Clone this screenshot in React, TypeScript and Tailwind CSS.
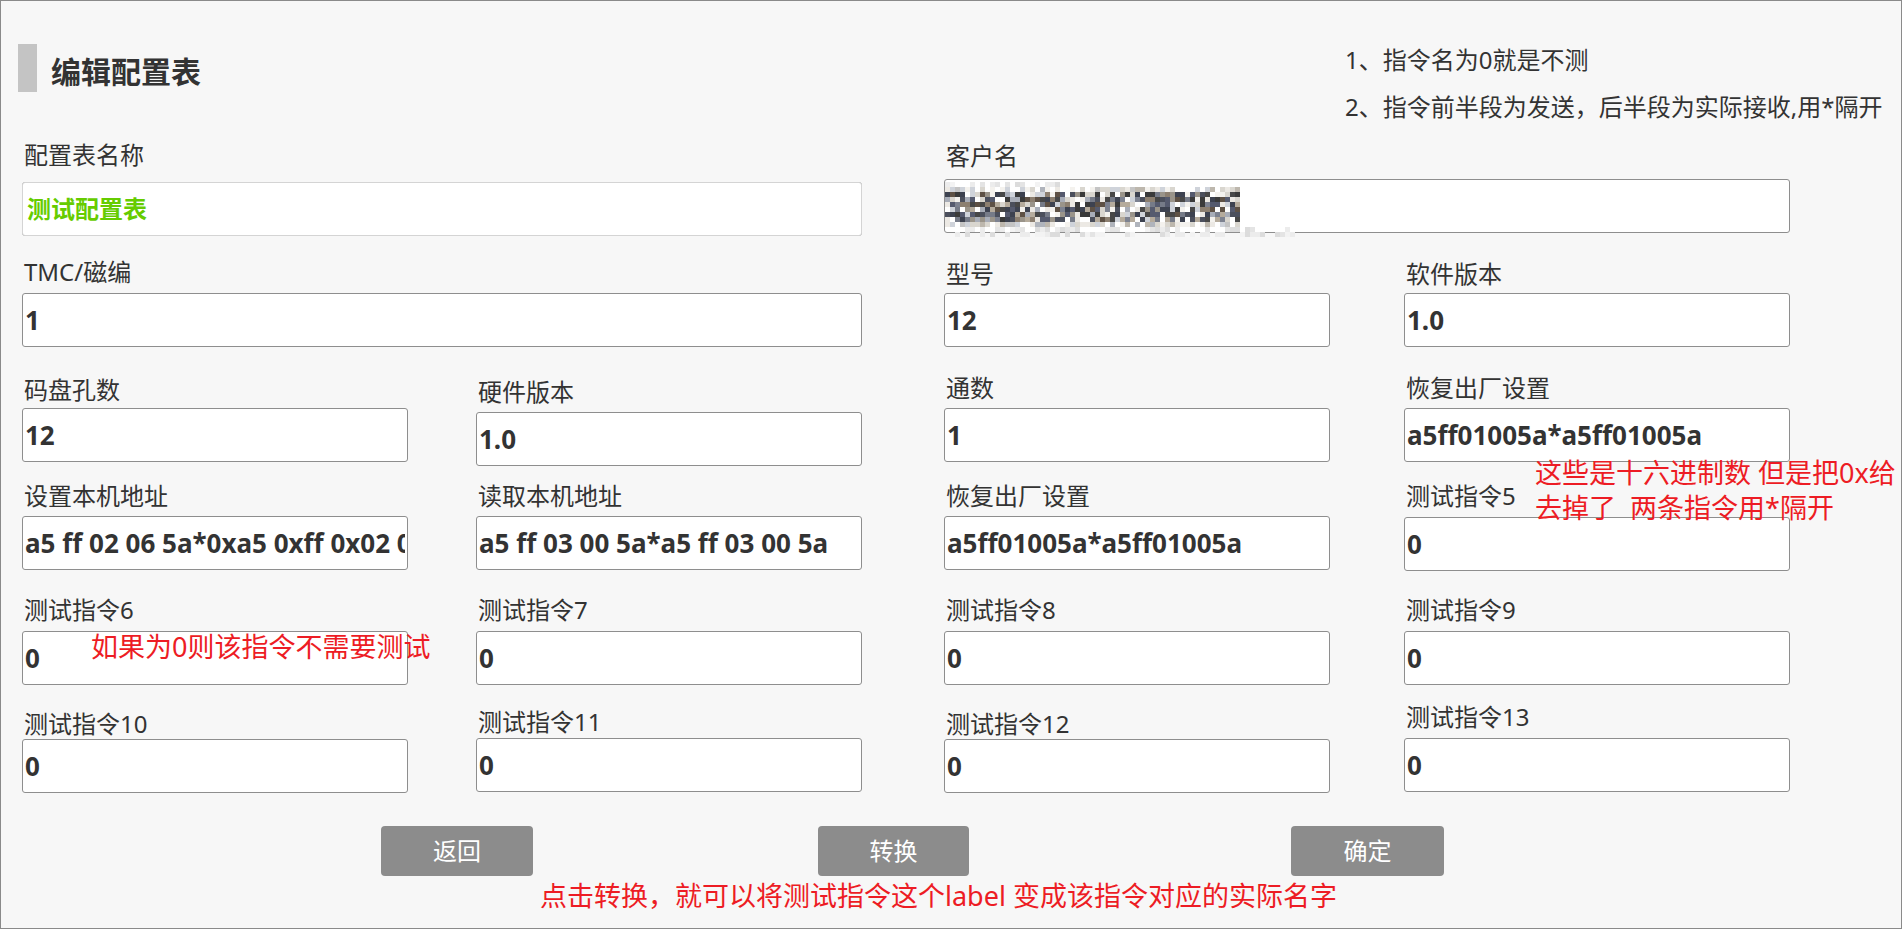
import { ReactNode } from "react";
import { twMerge } from "tailwind-merge";

interface FieldProps {
  label: string;
  value: string;
  labelClass?: string;
  inputClass?: string;
  children?: ReactNode;
}

function Field({ label, value, labelClass, inputClass, children }: FieldProps) {
  return (
    <div className="flex w-full flex-col">
      <span
        className={twMerge(
          "whitespace-nowrap pl-[2px] text-[24px] leading-[30px] text-[#333]",
          labelClass
        )}
      >
        {label}
      </span>
      <div className={twMerge("relative", inputClass)}>
        <input
          readOnly
          defaultValue={value}
          className="block h-[54px] w-full rounded-[3px] border border-[#8e8e8e] bg-white px-[2px] text-[26px] font-bold text-[#333] outline-none"
        />
        {children}
      </div>
    </div>
  );
}

// pixelated customer name, same look as the redacted screenshot
function Mosaic() {
  let s = 20231;
  const rand = () => {
    s = (s * 1664525 + 1013904223) % 4294967296;
    return s / 4294967296;
  };
  const pick = (list: string[]) => list[Math.floor(rand() * list.length)];
  const dark = ["#3a3a3a", "#4b4f5c", "#555a6e", "#5e5145", "#474747", "#3d4250"];
  const mid = ["#7d8290", "#9a948a", "#a8adb8", "#8c7f70", "#767b88", "#b5ab9c"];
  const light = ["#d9d6cf", "#ece9e4", "#ffffff", "#cfd3da", "#f4f2ee", "#ffffff"];
  const faint = ["#e4e4e4", "#ececec", "#f3f3f3", "#dcdcdc"];

  const cells: (string | undefined)[] = [];
  for (let r = 0; r < 11; r++) {
    for (let c = 0; c < 70; c++) {
      let color: string | undefined;
      const x = rand();
      if (r >= 2 && r <= 7 && c <= 58) {
        color = x < 0.38 ? pick(dark) : x < 0.66 ? pick(mid) : pick(light);
      } else if ((r === 1 || r === 8) && c <= 58) {
        color = x < 0.2 ? pick(["#c4c4c4", "#bdb7ad", "#b0b4bc"]) : pick(light);
      } else if (r >= 9 && c <= 69) {
        color = x < 0.55 ? pick(faint) : undefined;
      } else if (r === 0 && c <= 22) {
        color = x < 0.4 ? pick(faint) : undefined;
      }
      cells.push(color);
    }
  }

  return (
    <div className="pointer-events-none absolute left-[1px] top-[3px] grid grid-cols-[repeat(70,5px)] auto-rows-[5px]">
      {cells.map((color, i) => (
        <div key={i} style={color ? { backgroundColor: color } : undefined} />
      ))}
    </div>
  );
}

function Button({ children, className }: { children: ReactNode; className?: string }) {
  return (
    <button
      className={twMerge(
        "h-[50px] w-[152px] rounded-[4px] bg-[#8c8c8c] text-[24px] leading-[50px] text-white",
        className
      )}
    >
      {children}
    </button>
  );
}

export default function App() {
  return (
    <div className="relative box-border h-[929px] w-full overflow-hidden border border-[#8a8a8a] bg-[#f7f7f7] font-['Noto_Sans','Noto_Sans_CJK_SC',sans-serif] text-[#333]">
      {/* header */}
      <div className="flex h-[139px]">
        <div className="flex w-[1344px] items-start pl-[17px] pt-[43px]">
          <div className="h-[48px] w-[19px] bg-[#c4c4c4]" />
          <h1 className="ml-[14px] mt-[4px] text-[30px] font-bold leading-[48px] text-[#333]">
            编辑配置表
          </h1>
        </div>
        <div className="pt-[35px] text-[24px] leading-[47px] whitespace-nowrap">
          <p>1、指令名为0就是不测</p>
          <p>2、指令前半段为发送，后半段为实际接收,用*隔开</p>
        </div>
      </div>

      <div className="pl-[21px]">
        {/* row 1 */}
        <div className="flex h-[117px]">
          <div className="w-[840px]">
            <Field label="配置表名称" value="" inputClass="mt-[12px]">
              <span className="pointer-events-none absolute inset-0 flex items-center rounded-[3px] border border-[#d4d4d4] bg-white pl-[4px] text-[24px] font-bold text-[#66cc00]">
                测试配置表
              </span>
            </Field>
          </div>
          <div className="ml-[82px] w-[846px]">
            <Field label="客户名" value="" labelClass="mt-[1px]" inputClass="mt-[8px]">
              <Mosaic />
            </Field>
          </div>
        </div>

        {/* row 2 */}
        <div className="flex h-[116px]">
          <div className="w-[840px]">
            <Field label="TMC/磁编" value="1" inputClass="mt-[6px]" />
          </div>
          <div className="ml-[82px] flex w-[846px] gap-[74px]">
            <Field label="型号" value="12" labelClass="mt-[2px]" inputClass="mt-[4px]" />
            <Field label="软件版本" value="1.0" labelClass="mt-[2px]" inputClass="mt-[4px]" />
          </div>
        </div>

        {/* row 3 */}
        <div className="flex h-[108px]">
          <div className="flex w-[840px] gap-[68px]">
            <Field label="码盘孔数" value="12" labelClass="mt-[2px]" inputClass="mt-[3px]" />
            <Field label="硬件版本" value="1.0" labelClass="mt-[4px]" inputClass="mt-[5px]" />
          </div>
          <div className="ml-[82px] flex w-[846px] gap-[74px]">
            <Field label="通数" value="1" inputClass="mt-[5px]" />
            <Field label="恢复出厂设置" value="a5ff01005a*a5ff01005a" inputClass="mt-[5px]" />
          </div>
        </div>

        {/* row 4 */}
        <div className="flex h-[114px]">
          <div className="flex w-[840px] gap-[68px]">
            <Field
              label="设置本机地址"
              value="a5 ff 02 06 5a*0xa5 0xff 0x02 0x06 0x5a"
              inputClass="mt-[5px]"
            />
            <Field
              label="读取本机地址"
              value="a5 ff 03 00 5a*a5 ff 03 00 5a"
              inputClass="mt-[5px]"
            />
          </div>
          <div className="ml-[82px] flex w-[846px] gap-[74px]">
            <Field label="恢复出厂设置" value="a5ff01005a*a5ff01005a" inputClass="mt-[5px]" />
            <Field label="测试指令5" value="0" inputClass="mt-[6px]" />
          </div>
        </div>

        {/* row 5 */}
        <div className="flex h-[107px]">
          <div className="flex w-[840px] gap-[68px]">
            <Field label="测试指令6" value="0" inputClass="mt-[6px]">
              <span className="pointer-events-none absolute left-[69px] top-0 whitespace-nowrap text-[27px] leading-[32px] text-[#ed1c24]">
                如果为0则该指令不需要测试
              </span>
            </Field>
            <Field label="测试指令7" value="0" inputClass="mt-[6px]" />
          </div>
          <div className="ml-[82px] flex w-[846px] gap-[74px]">
            <Field label="测试指令8" value="0" inputClass="mt-[6px]" />
            <Field label="测试指令9" value="0" inputClass="mt-[6px]" />
          </div>
        </div>

        {/* row 6 */}
        <div className="flex h-[124px]">
          <div className="flex w-[840px] gap-[68px]">
            <Field label="测试指令10" value="0" labelClass="mt-[7px]" />
            <Field label="测试指令11" value="0" labelClass="mt-[5px]" inputClass="mt-[1px]" />
          </div>
          <div className="ml-[82px] flex w-[846px] gap-[74px]">
            <Field label="测试指令12" value="0" labelClass="mt-[7px]" />
            <Field label="测试指令13" value="0" inputClass="mt-[6px]" />
          </div>
        </div>
      </div>

      {/* buttons */}
      <div className="flex h-[50px]">
        <Button className="ml-[380px]">返回</Button>
        <Button className="ml-[285px] w-[151px]">转换</Button>
        <Button className="ml-[322px] w-[153px]">确定</Button>
      </div>
      <p className="ml-[539px] mt-[4px] whitespace-nowrap text-[27px] leading-[32px] text-[#ed1c24]">
        点击转换，就可以将测试指令这个label 变成该指令对应的实际名字
      </p>

      {/* annotation on the right */}
      <p className="pointer-events-none absolute left-[1534px] top-[454px] whitespace-nowrap text-[27px] leading-[35px] text-[#ed1c24]">
        这些是十六进制数 但是把0x给
        <br />
        去掉了&nbsp;&nbsp;两条指令用*隔开
      </p>
    </div>
  );
}
